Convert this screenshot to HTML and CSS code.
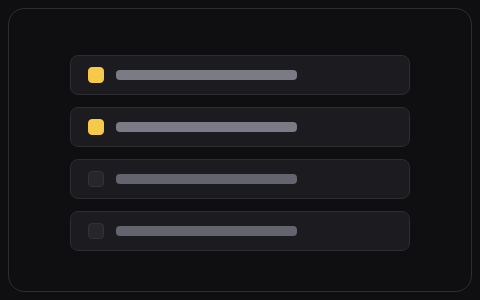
FILE: index.html
```html
<!DOCTYPE html>
<html lang="en">
<head>
  <meta charset="UTF-8">
  <title>Checklist</title>
  <link rel="stylesheet" href="styles.css">
</head>
<body>

  <div class="frame">
    <div class="list">
      <div class="row">
        <span class="box checked"></span>
        <span class="bar"></span>
      </div>
      <div class="row">
        <span class="box checked"></span>
        <span class="bar"></span>
      </div>
      <div class="row">
        <span class="box"></span>
        <span class="bar dim"></span>
      </div>
      <div class="row">
        <span class="box"></span>
        <span class="bar dim"></span>
      </div>
    </div>
  </div>

</body>
</html>
```

FILE: styles.css
```css
html, body {
  margin: 0;
  background-color: #0f0f11;
}

body {
  padding: 8px;
  width: 480px;
  height: 300px;
  box-sizing: border-box;
}

.frame {
  height: 284px;
  border: 1px solid #2c2c31;
  border-radius: 16px;
  box-sizing: border-box;
  padding-top: 46px;
  display: flex;
  justify-content: center;
}

.list {
  width: 340px;
  display: flex;
  flex-direction: column;
  gap: 12px;
}

.row {
  height: 40px;
  box-sizing: border-box;
  background-color: #1c1c20;
  border: 1px solid #2c2c31;
  border-radius: 8px;
  display: flex;
  align-items: center;
  padding-left: 17px;
  gap: 12px;
}

.box {
  width: 16px;
  height: 16px;
  box-sizing: border-box;
  border-radius: 4px;
  background-color: #26262b;
  border: 1px solid #323238;
}

.box.checked {
  background-color: #f7c948;
  border-color: #f7c948;
}

.bar {
  width: 181px;
  height: 10px;
  border-radius: 4px;
  background-color: #7b7b86;
}

.bar.dim {
  background-color: #64646e;
}
```
